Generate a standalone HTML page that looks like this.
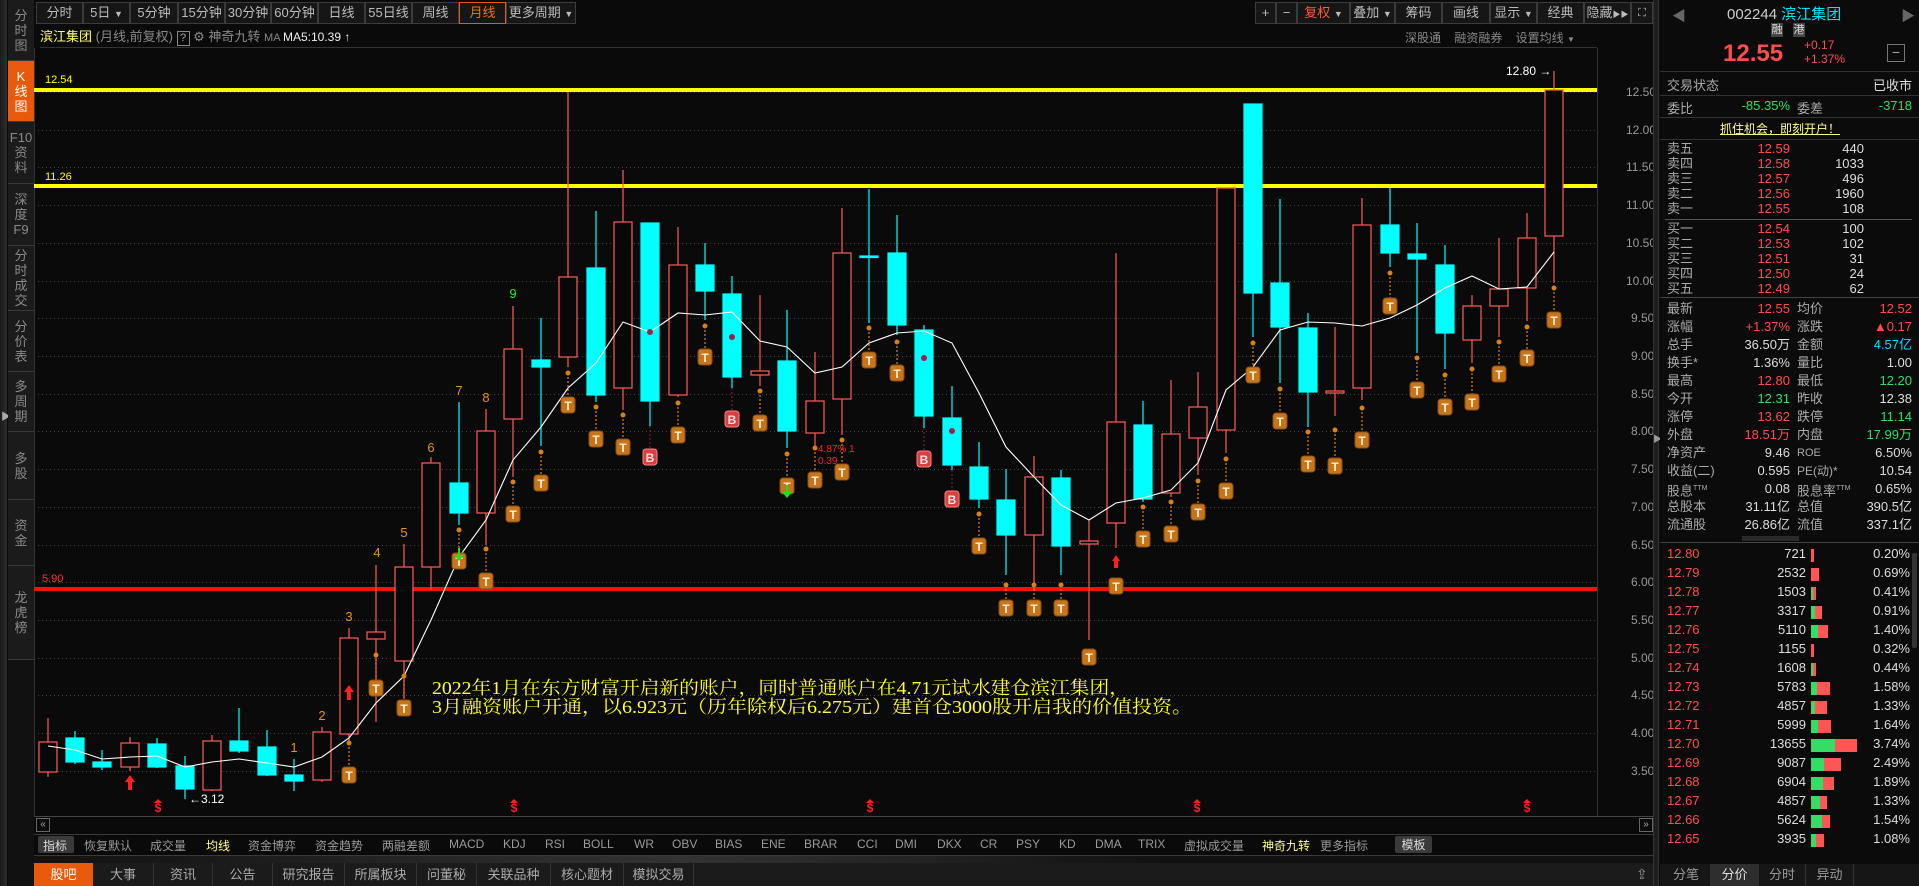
<!DOCTYPE html>
<html><head><meta charset="utf-8">
<style>
*{margin:0;padding:0;box-sizing:border-box}
body{width:1919px;height:886px;background:#0a0a0a;overflow:hidden;font-family:"Liberation Sans","Noto Sans CJK SC",sans-serif;position:relative}
.abs{position:absolute}
.tb{position:absolute;top:2px;height:22px;border:1px solid #3c3c3c;background:#161616;color:#bbb;font-size:13px;line-height:20px;text-align:center;white-space:nowrap;overflow:hidden}
.side{position:absolute;left:8px;width:26px;background:#1b1b1b;border-bottom:1px solid #3a3a3a;color:#8a8a8a;font-size:13px;line-height:15px;text-align:center;display:flex;flex-direction:column;justify-content:center}
svg text{font-family:"Liberation Sans","Noto Sans CJK SC",sans-serif}
</style></head><body>

<div class="abs" style="left:0;top:0;width:7px;height:886px;background:linear-gradient(90deg,#1a1a1a,#2e2e2e)"></div>
<div class="abs" style="left:1px;top:408px;color:#aaa;font-size:10px">▶</div>
<div class="side" style="top:0;height:61px">分<br>时<br>图</div>
<div class="side" style="top:61px;height:61px;background:#e8590c;color:#fff">K<br>线<br>图</div>
<div class="side" style="top:122px;height:62px">F10<br>资<br>料</div>
<div class="side" style="top:184px;height:62px">深<br>度<br>F9</div>
<div class="side" style="top:246px;height:65px">分<br>时<br>成<br>交</div>
<div class="side" style="top:311px;height:61px">分<br>价<br>表</div>
<div class="side" style="top:372px;height:60px">多<br>周<br>期</div>
<div class="side" style="top:432px;height:68px">多<br>股</div>
<div class="side" style="top:500px;height:66px">资<br>金</div>
<div class="side" style="top:566px;height:94px">龙<br>虎<br>榜</div>
<div class="abs" style="left:8px;top:660px;width:26px;height:226px;background:#111"></div>

<div class="tb" style="left:36px;width:47px">分时</div>
<div class="tb" style="left:83px;width:47px">5日 <span style="font-size:9px">▼</span></div>
<div class="tb" style="left:130px;width:48px">5分钟</div>
<div class="tb" style="left:178px;width:47px">15分钟</div>
<div class="tb" style="left:225px;width:46px">30分钟</div>
<div class="tb" style="left:271px;width:47px">60分钟</div>
<div class="tb" style="left:318px;width:47px">日线</div>
<div class="tb" style="left:365px;width:47px">55日线</div>
<div class="tb" style="left:412px;width:47px">周线</div>
<div class="tb" style="left:459px;width:47px;color:#ff6a1a;border-color:#e8590c">月线</div>
<div class="tb" style="left:506px;width:70px">更多周期 <span style="font-size:9px">▼</span></div>

<div class="tb" style="left:1255px;width:21px">+</div>
<div class="tb" style="left:1276px;width:21px">−</div>
<div class="tb" style="left:1297px;width:53px;color:#ff5a3a">复权 <span style="font-size:9px;color:#bbb">▼</span></div>
<div class="tb" style="left:1350px;width:45px">叠加 <span style="font-size:9px">▼</span></div>
<div class="tb" style="left:1395px;width:47px">筹码</div>
<div class="tb" style="left:1442px;width:48px">画线</div>
<div class="tb" style="left:1490px;width:47px">显示 <span style="font-size:9px">▼</span></div>
<div class="tb" style="left:1537px;width:47px">经典</div>
<div class="tb" style="left:1584px;width:47px">隐藏<span style="font-size:8px">▶▶</span></div>
<div class="tb" style="left:1631px;width:22px;font-size:11px">⛶</div>

<div class="abs" style="left:40px;top:29px;font-size:13px;color:#ccc;white-space:nowrap;line-height:16px">
<span style="color:#ffff66">滨江集团</span><span style="color:#888"> (月线,前复权) </span><span style="display:inline-block;border:1px solid #888;color:#aaa;width:13px;height:15px;text-align:center;font-size:11px;line-height:13px">?</span>
<span style="color:#888"> ⚙ 神奇九转 </span><span style="color:#888;font-size:11px">MA </span><span style="color:#eee;font-size:12px">MA5:10.39 ↑</span></div>
<div class="abs" style="left:1405px;top:29px;font-size:12px;color:#888;white-space:nowrap">深股通 &nbsp;&nbsp; 融资融券 &nbsp;&nbsp; 设置均线 <span style="font-size:8px">▼</span></div>
<div class="abs" style="left:40px;top:47px;width:1557px;height:1px;background:#333"></div>

<svg class="abs" style="left:0;top:0" width="1919" height="886" viewBox="0 0 1919 886">
<g stroke="#444" stroke-width="1" stroke-dasharray="1,3">
<line x1="34" y1="92.5" x2="1597" y2="92.5"/><line x1="34" y1="130.5" x2="1597" y2="130.5"/><line x1="34" y1="167.5" x2="1597" y2="167.5"/><line x1="34" y1="205.5" x2="1597" y2="205.5"/><line x1="34" y1="243.5" x2="1597" y2="243.5"/><line x1="34" y1="281.5" x2="1597" y2="281.5"/><line x1="34" y1="318.5" x2="1597" y2="318.5"/><line x1="34" y1="356.5" x2="1597" y2="356.5"/><line x1="34" y1="394.5" x2="1597" y2="394.5"/><line x1="34" y1="431.5" x2="1597" y2="431.5"/><line x1="34" y1="469.5" x2="1597" y2="469.5"/><line x1="34" y1="507.5" x2="1597" y2="507.5"/><line x1="34" y1="545.5" x2="1597" y2="545.5"/><line x1="34" y1="582.5" x2="1597" y2="582.5"/><line x1="34" y1="620.5" x2="1597" y2="620.5"/><line x1="34" y1="658.5" x2="1597" y2="658.5"/><line x1="34" y1="695.5" x2="1597" y2="695.5"/><line x1="34" y1="733.5" x2="1597" y2="733.5"/><line x1="34" y1="771.5" x2="1597" y2="771.5"/>
</g>
<line x1="34.5" y1="48" x2="34.5" y2="816" stroke="#333"/>
<line x1="1597.5" y1="48" x2="1597.5" y2="816" stroke="#333"/>
<line x1="34" y1="816.5" x2="1653" y2="816.5" stroke="#444"/>
<g fill="#999" font-size="12">
<text x="1626" y="96">12.50</text><text x="1626" y="134">12.00</text><text x="1626" y="171">11.50</text><text x="1626" y="209">11.00</text><text x="1626" y="247">10.50</text><text x="1626" y="285">10.00</text><text x="1631" y="322">9.50</text><text x="1631" y="360">9.00</text><text x="1631" y="398">8.50</text><text x="1631" y="435">8.00</text><text x="1631" y="473">7.50</text><text x="1631" y="511">7.00</text><text x="1631" y="549">6.50</text><text x="1631" y="586">6.00</text><text x="1631" y="624">5.50</text><text x="1631" y="662">5.00</text><text x="1631" y="699">4.50</text><text x="1631" y="737">4.00</text><text x="1631" y="775">3.50</text>
</g>
<rect x="34" y="88" width="1563" height="4" fill="#ffff00"/>
<rect x="34" y="184" width="1563" height="4" fill="#ffff00"/>
<rect x="34" y="587" width="1563" height="4" fill="#ff1010"/>
<text x="45" y="83" fill="#ffff00" font-size="11">12.54</text>
<text x="45" y="180" fill="#ffff00" font-size="11">11.26</text>
<text x="42" y="582" fill="#ff3030" font-size="11">5.90</text>

<g stroke-width="1.2">
<g stroke="#ff5a5a" fill="#080808">
<line x1="48" y1="718" x2="48" y2="777"/><rect x="39" y="742" width="18" height="30"/>
<line x1="130" y1="737" x2="130" y2="771"/><rect x="121" y="743" width="18" height="24"/>
<line x1="212" y1="735" x2="212" y2="791"/><rect x="203" y="741" width="18" height="49"/>
<line x1="322" y1="727" x2="322" y2="782"/><rect x="313" y="732" width="18" height="48"/>
<line x1="349" y1="628" x2="349" y2="745"/><rect x="340" y="638" width="18" height="96"/>
<line x1="376" y1="565" x2="376" y2="722"/><rect x="367" y="632" width="18" height="7"/>
<line x1="404" y1="544" x2="404" y2="699"/><rect x="395" y="567" width="18" height="94"/>
<line x1="431" y1="457" x2="431" y2="590"/><rect x="422" y="463" width="18" height="104"/>
<line x1="486" y1="409" x2="486" y2="545"/><rect x="477" y="431" width="18" height="82"/>
<line x1="513" y1="306" x2="513" y2="477"/><rect x="504" y="349" width="18" height="70"/>
<line x1="568" y1="92" x2="568" y2="367"/><rect x="559" y="277" width="18" height="80"/>
<line x1="623" y1="170" x2="623" y2="410"/><rect x="614" y="222" width="18" height="166"/>
<line x1="678" y1="227" x2="678" y2="397"/><rect x="669" y="265" width="18" height="130"/>
<line x1="760" y1="295" x2="760" y2="386"/><rect x="751" y="371" width="18" height="4"/>
<line x1="815" y1="352" x2="815" y2="447"/><rect x="806" y="401" width="18" height="32"/>
<line x1="842" y1="208" x2="842" y2="435"/><rect x="833" y="253" width="18" height="146"/>
<line x1="1034" y1="456" x2="1034" y2="590"/><rect x="1025" y="477" width="18" height="58"/>
<line x1="1089" y1="520" x2="1089" y2="640"/><rect x="1080" y="541" width="18" height="3"/>
<line x1="1116" y1="253" x2="1116" y2="548"/><rect x="1107" y="422" width="18" height="101"/>
<line x1="1171" y1="380" x2="1171" y2="497"/><rect x="1162" y="434" width="18" height="59"/>
<line x1="1198" y1="372" x2="1198" y2="475"/><rect x="1189" y="407" width="18" height="31"/>
<line x1="1226" y1="188" x2="1226" y2="453"/><rect x="1217" y="188" width="18" height="242"/>
<line x1="1335" y1="327" x2="1335" y2="416"/><rect x="1326" y="391" width="18" height="2"/>
<line x1="1362" y1="198" x2="1362" y2="400"/><rect x="1353" y="225" width="18" height="163"/>
<line x1="1472" y1="295" x2="1472" y2="363"/><rect x="1463" y="306" width="18" height="34"/>
<line x1="1499" y1="238" x2="1499" y2="337"/><rect x="1490" y="289" width="18" height="17"/>
<line x1="1527" y1="213" x2="1527" y2="321"/><rect x="1518" y="238" width="18" height="50"/>
<line x1="1554" y1="71" x2="1554" y2="283"/><rect x="1545" y="90" width="18" height="146"/>
</g>
<g stroke="#00ffff" fill="#00ffff">
<line x1="75" y1="731" x2="75" y2="764"/><rect x="66" y="738" width="18" height="24"/>
<line x1="102" y1="750" x2="102" y2="770"/><rect x="93" y="762" width="18" height="5"/>
<line x1="157" y1="738" x2="157" y2="768"/><rect x="148" y="744" width="18" height="23"/>
<line x1="185" y1="756" x2="185" y2="799"/><rect x="176" y="766" width="18" height="23"/>
<line x1="239" y1="708" x2="239" y2="753"/><rect x="230" y="741" width="18" height="10"/>
<line x1="267" y1="730" x2="267" y2="776"/><rect x="258" y="747" width="18" height="28"/>
<line x1="294" y1="759" x2="294" y2="791"/><rect x="285" y="775" width="18" height="6"/>
<line x1="459" y1="402" x2="459" y2="525"/><rect x="450" y="483" width="18" height="30"/>
<line x1="541" y1="318" x2="541" y2="446"/><rect x="532" y="360" width="18" height="7"/>
<line x1="596" y1="211" x2="596" y2="402"/><rect x="587" y="268" width="18" height="127"/>
<line x1="650" y1="223" x2="650" y2="426"/><rect x="641" y="223" width="18" height="178"/>
<line x1="705" y1="243" x2="705" y2="320"/><rect x="696" y="265" width="18" height="26"/>
<line x1="732" y1="276" x2="732" y2="388"/><rect x="723" y="294" width="18" height="83"/>
<line x1="787" y1="310" x2="787" y2="448"/><rect x="778" y="361" width="18" height="70"/>
<line x1="869" y1="189" x2="869" y2="323"/><rect x="860" y="256" width="18" height="1.5"/>
<line x1="897" y1="215" x2="897" y2="335"/><rect x="888" y="253" width="18" height="72"/>
<line x1="924" y1="325" x2="924" y2="428"/><rect x="915" y="330" width="18" height="86"/>
<line x1="952" y1="386" x2="952" y2="470"/><rect x="943" y="418" width="18" height="47"/>
<line x1="979" y1="442" x2="979" y2="508"/><rect x="970" y="467" width="18" height="32"/>
<line x1="1006" y1="469" x2="1006" y2="575"/><rect x="997" y="500" width="18" height="35"/>
<line x1="1061" y1="470" x2="1061" y2="575"/><rect x="1052" y="478" width="18" height="68"/>
<line x1="1143" y1="401" x2="1143" y2="502"/><rect x="1134" y="425" width="18" height="74"/>
<line x1="1253" y1="104" x2="1253" y2="337"/><rect x="1244" y="104" width="18" height="189"/>
<line x1="1280" y1="199" x2="1280" y2="383"/><rect x="1271" y="283" width="18" height="44"/>
<line x1="1308" y1="313" x2="1308" y2="427"/><rect x="1299" y="328" width="18" height="64"/>
<line x1="1390" y1="188" x2="1390" y2="267"/><rect x="1381" y="225" width="18" height="28"/>
<line x1="1417" y1="223" x2="1417" y2="353"/><rect x="1408" y="254" width="18" height="5"/>
<line x1="1445" y1="245" x2="1445" y2="369"/><rect x="1436" y="265" width="18" height="68"/>
</g>
</g>
<polyline fill="none" stroke="#fff" stroke-width="1.1" points="48,746 75,750 102,759 130,757 157,756 185,767 212,762 239,759 267,763 294,767 322,757 349,738 376,703 404,676 431,620 459,557 486,520 513,460 541,427 568,388 596,363 623,322 650,332 678,313 705,315 732,312 760,341 787,347 815,373 842,367 869,343 897,333 924,331 952,343 979,393 1006,447 1034,477 1061,505 1089,520 1116,503 1143,498 1171,490 1198,463 1226,390 1253,367 1280,330 1308,322 1335,323 1362,326 1390,318 1417,305 1445,288 1472,276 1499,289 1527,287 1554,252"/>
<g fill="#a0204a"><circle cx="650" cy="332" r="3"/><circle cx="732" cy="337" r="3"/><circle cx="924" cy="358" r="3"/><circle cx="952" cy="431" r="3"/></g>

<g stroke="#e08020" stroke-width="1.2" stroke-dasharray="2,2">
<line x1="349" y1="743" x2="349" y2="767"/><line x1="376" y1="655" x2="376" y2="680"/><line x1="404" y1="676" x2="404" y2="700"/><line x1="459" y1="530" x2="459" y2="553"/><line x1="486" y1="549" x2="486" y2="573"/><line x1="513" y1="482" x2="513" y2="506"/><line x1="541" y1="452" x2="541" y2="475"/><line x1="568" y1="373" x2="568" y2="397"/><line x1="596" y1="407" x2="596" y2="431"/><line x1="623" y1="415" x2="623" y2="439"/><line x1="678" y1="403" x2="678" y2="427"/><line x1="705" y1="326" x2="705" y2="349"/><line x1="760" y1="391" x2="760" y2="415"/><line x1="787" y1="454" x2="787" y2="478"/><line x1="815" y1="448" x2="815" y2="472"/><line x1="842" y1="440" x2="842" y2="464"/><line x1="869" y1="328" x2="869" y2="352"/><line x1="897" y1="342" x2="897" y2="365"/><line x1="979" y1="514" x2="979" y2="538"/><line x1="1006" y1="585" x2="1006" y2="600"/><line x1="1034" y1="585" x2="1034" y2="600"/><line x1="1061" y1="585" x2="1061" y2="600"/><line x1="1143" y1="507" x2="1143" y2="531"/><line x1="1171" y1="502" x2="1171" y2="526"/><line x1="1198" y1="481" x2="1198" y2="504"/><line x1="1226" y1="459" x2="1226" y2="483"/><line x1="1253" y1="343" x2="1253" y2="367"/><line x1="1280" y1="389" x2="1280" y2="413"/><line x1="1308" y1="432" x2="1308" y2="456"/><line x1="1335" y1="430" x2="1335" y2="458"/><line x1="1362" y1="408" x2="1362" y2="432"/><line x1="1390" y1="273" x2="1390" y2="298"/><line x1="1417" y1="358" x2="1417" y2="382"/><line x1="1445" y1="375" x2="1445" y2="399"/><line x1="1472" y1="369" x2="1472" y2="394"/><line x1="1499" y1="342" x2="1499" y2="366"/><line x1="1527" y1="327" x2="1527" y2="350"/><line x1="1554" y1="288" x2="1554" y2="312"/>
</g>
<g fill="#d8801a"><circle cx="349" cy="743" r="2.5"/><circle cx="376" cy="655" r="2.5"/><circle cx="404" cy="676" r="2.5"/><circle cx="459" cy="530" r="2.5"/><circle cx="486" cy="549" r="2.5"/><circle cx="513" cy="482" r="2.5"/><circle cx="541" cy="452" r="2.5"/><circle cx="568" cy="373" r="2.5"/><circle cx="596" cy="407" r="2.5"/><circle cx="623" cy="415" r="2.5"/><circle cx="678" cy="403" r="2.5"/><circle cx="705" cy="326" r="2.5"/><circle cx="760" cy="391" r="2.5"/><circle cx="787" cy="454" r="2.5"/><circle cx="815" cy="448" r="2.5"/><circle cx="842" cy="440" r="2.5"/><circle cx="869" cy="328" r="2.5"/><circle cx="897" cy="342" r="2.5"/><circle cx="979" cy="514" r="2.5"/><circle cx="1006" cy="585" r="2.5"/><circle cx="1034" cy="585" r="2.5"/><circle cx="1061" cy="585" r="2.5"/><circle cx="1143" cy="507" r="2.5"/><circle cx="1171" cy="502" r="2.5"/><circle cx="1198" cy="481" r="2.5"/><circle cx="1226" cy="459" r="2.5"/><circle cx="1253" cy="343" r="2.5"/><circle cx="1280" cy="389" r="2.5"/><circle cx="1308" cy="432" r="2.5"/><circle cx="1335" cy="430" r="2.5"/><circle cx="1362" cy="408" r="2.5"/><circle cx="1390" cy="273" r="2.5"/><circle cx="1417" cy="358" r="2.5"/><circle cx="1445" cy="375" r="2.5"/><circle cx="1472" cy="369" r="2.5"/><circle cx="1499" cy="342" r="2.5"/><circle cx="1527" cy="327" r="2.5"/><circle cx="1554" cy="288" r="2.5"/></g>
<g fill="#c8741a" stroke="#8a5010">
<rect x="342" y="767" width="14" height="16" rx="3"/><rect x="369" y="680" width="14" height="16" rx="3"/><rect x="397" y="700" width="14" height="16" rx="3"/><rect x="452" y="553" width="14" height="16" rx="3"/><rect x="479" y="573" width="14" height="16" rx="3"/><rect x="506" y="506" width="14" height="16" rx="3"/><rect x="534" y="475" width="14" height="16" rx="3"/><rect x="561" y="397" width="14" height="16" rx="3"/><rect x="589" y="431" width="14" height="16" rx="3"/><rect x="616" y="439" width="14" height="16" rx="3"/><rect x="671" y="427" width="14" height="16" rx="3"/><rect x="698" y="349" width="14" height="16" rx="3"/><rect x="753" y="415" width="14" height="16" rx="3"/><rect x="780" y="478" width="14" height="16" rx="3"/><rect x="808" y="472" width="14" height="16" rx="3"/><rect x="835" y="464" width="14" height="16" rx="3"/><rect x="862" y="352" width="14" height="16" rx="3"/><rect x="890" y="365" width="14" height="16" rx="3"/><rect x="972" y="538" width="14" height="16" rx="3"/><rect x="999" y="600" width="14" height="16" rx="3"/><rect x="1027" y="600" width="14" height="16" rx="3"/><rect x="1054" y="600" width="14" height="16" rx="3"/><rect x="1082" y="649" width="14" height="16" rx="3"/><rect x="1109" y="578" width="14" height="16" rx="3"/><rect x="1136" y="531" width="14" height="16" rx="3"/><rect x="1164" y="526" width="14" height="16" rx="3"/><rect x="1191" y="504" width="14" height="16" rx="3"/><rect x="1219" y="483" width="14" height="16" rx="3"/><rect x="1246" y="367" width="14" height="16" rx="3"/><rect x="1273" y="413" width="14" height="16" rx="3"/><rect x="1301" y="456" width="14" height="16" rx="3"/><rect x="1328" y="458" width="14" height="16" rx="3"/><rect x="1355" y="432" width="14" height="16" rx="3"/><rect x="1383" y="298" width="14" height="16" rx="3"/><rect x="1410" y="382" width="14" height="16" rx="3"/><rect x="1438" y="399" width="14" height="16" rx="3"/><rect x="1465" y="394" width="14" height="16" rx="3"/><rect x="1492" y="366" width="14" height="16" rx="3"/><rect x="1520" y="350" width="14" height="16" rx="3"/><rect x="1547" y="312" width="14" height="16" rx="3"/>
</g>
<g fill="#fff0d0" font-size="12" font-weight="bold" text-anchor="middle">
<text x="349" y="780">T</text><text x="376" y="693">T</text><text x="404" y="713">T</text><text x="459" y="566">T</text><text x="486" y="586">T</text><text x="513" y="519">T</text><text x="541" y="488">T</text><text x="568" y="410">T</text><text x="596" y="444">T</text><text x="623" y="452">T</text><text x="678" y="440">T</text><text x="705" y="362">T</text><text x="760" y="428">T</text><text x="787" y="491">T</text><text x="815" y="485">T</text><text x="842" y="477">T</text><text x="869" y="365">T</text><text x="897" y="378">T</text><text x="979" y="551">T</text><text x="1006" y="613">T</text><text x="1034" y="613">T</text><text x="1061" y="613">T</text><text x="1089" y="662">T</text><text x="1116" y="591">T</text><text x="1143" y="544">T</text><text x="1171" y="539">T</text><text x="1198" y="517">T</text><text x="1226" y="496">T</text><text x="1253" y="380">T</text><text x="1280" y="426">T</text><text x="1308" y="469">T</text><text x="1335" y="471">T</text><text x="1362" y="445">T</text><text x="1390" y="311">T</text><text x="1417" y="395">T</text><text x="1445" y="412">T</text><text x="1472" y="407">T</text><text x="1499" y="379">T</text><text x="1527" y="363">T</text><text x="1554" y="325">T</text>
</g>
<g stroke="#902030" stroke-dasharray="2,2"><line x1="650" y1="426" x2="650" y2="449"/><line x1="732" y1="388" x2="732" y2="411"/><line x1="924" y1="428" x2="924" y2="451"/><line x1="952" y1="470" x2="952" y2="491"/></g>
<g fill="#d84040" stroke="#ff8080"><rect x="643" y="449" width="14" height="16" rx="3"/><rect x="725" y="411" width="14" height="16" rx="3"/><rect x="917" y="451" width="14" height="16" rx="3"/><rect x="945" y="491" width="14" height="16" rx="3"/></g>
<g fill="#ffe0e0" font-size="12" font-weight="bold" text-anchor="middle"><text x="650" y="462">B</text><text x="732" y="424">B</text><text x="924" y="464">B</text><text x="952" y="504">B</text></g>
<g fill="#22dd22"><rect x="458" y="548" width="2" height="10"/><path d="M454,555 L464,555 L459,561Z"/><rect x="786" y="485" width="2" height="8"/><path d="M782,492 L792,492 L787,498Z"/></g>
<g fill="#ff2020"><path d="M130,775 L125,782 L128,782 L128,790 L132,790 L132,782 L135,782Z"/><path d="M349,685 L344,692 L347,692 L347,700 L351,700 L351,692 L354,692Z"/><path d="M1116,555 L1112,561 L1114,561 L1114,568 L1118,568 L1118,561 L1120,561Z"/></g>
<g fill="#ff2020" font-size="12" font-weight="bold" text-anchor="middle">
<path d="M154,803 L158,799 L162,803Z"/><text x="158" y="812">$</text>
<path d="M510,803 L514,799 L518,803Z"/><text x="514" y="812">$</text>
<path d="M866,803 L870,799 L874,803Z"/><text x="870" y="812">$</text>
<path d="M1193,803 L1197,799 L1201,803Z"/><text x="1197" y="812">$</text>
<path d="M1523,803 L1527,799 L1531,803Z"/><text x="1527" y="812">$</text>
</g>
<g fill="#e8901a" font-size="13" text-anchor="middle">
<text x="294" y="752">1</text><text x="322" y="720">2</text><text x="349" y="621">3</text><text x="377" y="557">4</text><text x="404" y="537">5</text><text x="431" y="452">6</text><text x="459" y="395">7</text><text x="486" y="402">8</text>
</g>
<text x="513" y="298" fill="#22ee22" font-size="13" text-anchor="middle">9</text>
<text x="189" y="803" fill="#fff" font-size="12">←3.12</text>
<text x="1506" y="75" fill="#fff" font-size="12">12.80 →</text>
<g fill="#ff2020" font-size="10"><text x="818" y="452">4.87%  1</text><text x="818" y="464">0.39</text></g>
<g fill="#ffff33" font-size="18">
<text x="432" y="694" textLength="697" lengthAdjust="spacingAndGlyphs" style="font-family:'Liberation Serif','Noto Serif CJK SC',serif">2022年1月在东方财富开启新的账户，同时普通账户在4.71元试水建仓滨江集团，</text>
<text x="432" y="713" textLength="760" lengthAdjust="spacingAndGlyphs" style="font-family:'Liberation Serif','Noto Serif CJK SC',serif">3月融资账户开通，以6.923元（历年除权后6.275元）建首仓3000股开启我的价值投资。</text>
</g>
</svg>

<div class="abs" style="left:36px;top:818px;width:14px;height:14px;border:1px solid #666;color:#aaa;font-size:10px;line-height:12px;text-align:center">«</div>
<div class="abs" style="left:1639px;top:818px;width:14px;height:14px;border:1px solid #666;color:#aaa;font-size:10px;line-height:12px;text-align:center">»</div>
<div class="abs" style="left:34px;top:834px;width:1619px;height:1px;background:#3a3a3a"></div>
<div class="abs" style="left:34px;top:855px;width:1619px;height:1px;background:#3a3a3a"></div>
<div class="abs" style="left:34px;top:856px;width:1619px;height:7px;background:linear-gradient(90deg,#111,#333 40%,#111 70%)"></div>
<div class="abs" style="left:38px;top:836px;width:36px;height:17px;background:#3a3a3a;border-radius:2px"></div>
<div class="abs" style="left:0;top:837px;width:1660px;height:16px;font-size:12px;color:#999;white-space:nowrap">
<span class="abs" style="left:43px;color:#ddd">指标</span>
<span class="abs" style="left:84px">恢复默认</span><span class="abs" style="left:150px">成交量</span><span class="abs" style="left:206px;color:#ffff88">均线</span><span class="abs" style="left:248px">资金博弈</span><span class="abs" style="left:315px">资金趋势</span><span class="abs" style="left:382px">两融差额</span>
<span class="abs" style="left:449px">MACD</span><span class="abs" style="left:503px">KDJ</span><span class="abs" style="left:545px">RSI</span><span class="abs" style="left:583px">BOLL</span><span class="abs" style="left:634px">WR</span><span class="abs" style="left:672px">OBV</span><span class="abs" style="left:715px">BIAS</span><span class="abs" style="left:761px">ENE</span><span class="abs" style="left:804px">BRAR</span><span class="abs" style="left:857px">CCI</span><span class="abs" style="left:895px">DMI</span><span class="abs" style="left:937px">DKX</span><span class="abs" style="left:980px">CR</span><span class="abs" style="left:1016px">PSY</span><span class="abs" style="left:1059px">KD</span><span class="abs" style="left:1095px">DMA</span><span class="abs" style="left:1138px">TRIX</span><span class="abs" style="left:1184px">虚拟成交量</span><span class="abs" style="left:1262px;color:#ffff88">神奇九转</span><span class="abs" style="left:1320px">更多指标</span>
<span class="abs" style="left:1395px;top:-1px;width:37px;height:17px;background:#3a3a3a;color:#ddd;text-align:center;border-radius:2px">模板</span>
</div>
<div class="abs" style="left:34px;top:863px;width:1619px;height:23px;background:#1b1b1b"></div>
<div class="abs" style="left:0;top:863px;width:1660px;height:23px;font-size:13px;color:#aaa;line-height:23px;white-space:nowrap">
<span class="abs" style="left:34px;width:59px;background:#e8590c;color:#fff;text-align:center">股吧</span>
<span class="abs" style="left:93px;width:61px;text-align:center;border-right:1px solid #333">大事</span><span class="abs" style="left:154px;width:59px;text-align:center;border-right:1px solid #333">资讯</span><span class="abs" style="left:213px;width:60px;text-align:center;border-right:1px solid #333">公告</span><span class="abs" style="left:273px;width:72px;text-align:center;border-right:1px solid #333">研究报告</span><span class="abs" style="left:345px;width:72px;text-align:center;border-right:1px solid #333">所属板块</span><span class="abs" style="left:417px;width:60px;text-align:center;border-right:1px solid #333">问董秘</span><span class="abs" style="left:477px;width:74px;text-align:center;border-right:1px solid #333">关联品种</span><span class="abs" style="left:551px;width:73px;text-align:center;border-right:1px solid #333">核心题材</span><span class="abs" style="left:624px;width:70px;text-align:center;border-right:1px solid #333">模拟交易</span>
<span class="abs" style="left:1636px;color:#999;font-size:14px">⇪</span>
</div>

<div class="abs" style="left:1653px;top:0;width:6px;height:886px;background:#1e1e1e;border-left:1px solid #333;border-right:1px solid #333"></div>
<div class="abs" style="left:1653px;top:432px;color:#999;font-size:9px">▶</div>

<div class="abs" style="left:1660px;top:0;width:259px;height:886px;background:#0b0b0b;color:#aaa;font-size:13px;white-space:nowrap">
<span class="abs" style="left:12px;top:6px;color:#666;font-size:14px">◀</span>
<span class="abs" style="left:241px;top:6px;color:#666;font-size:14px">▶</span>
<span class="abs" style="left:67px;top:3px;font-size:15px;color:#ccc">002244 <span style="color:#00e5ff">滨江集团</span></span>
<span class="abs" style="left:111px;top:23px;width:12px;height:14px;background:#444;color:#ddd;font-size:11px;line-height:14px;text-align:center">融</span>
<span class="abs" style="left:133px;top:23px;width:12px;height:14px;background:#444;color:#ddd;font-size:11px;line-height:14px;text-align:center">港</span>
<span class="abs" style="left:63px;top:40px;font-size:24px;font-weight:bold;color:#ff4d4d">12.55</span>
<span class="abs" style="left:144px;top:38px;font-size:12px;color:#ff4d4d;line-height:14px">+0.17<br>+1.37%</span>
<span class="abs" style="left:227px;top:44px;width:18px;height:18px;border:1px solid #777;color:#aaa;font-size:14px;line-height:15px;text-align:center">−</span>
<div class="abs" style="left:0;top:71px;width:259px;height:1px;background:#333"></div>
<span class="abs" style="left:7px;top:75px">交易状态</span><span class="abs" style="right:7px;top:75px;color:#ddd">已收市</span>
<div class="abs" style="left:0;top:95px;width:259px;height:1px;background:#333"></div>
<span class="abs" style="left:7px;top:98px">委比</span><span class="abs" style="right:129px;top:98px;color:#33dd66">-85.35%</span><span class="abs" style="left:137px;top:98px">委差</span><span class="abs" style="right:7px;top:98px;color:#33dd66">-3718</span>
<div class="abs" style="left:0;top:117px;width:259px;height:1px;background:#333"></div>
<span class="abs" style="left:60px;top:120px;color:#ffff88;text-decoration:underline;font-size:12px">抓住机会，即刻开户！</span>
<div class="abs" style="left:0;top:139px;width:259px;height:1px;background:#333"></div>
<div class="abs" style="left:0;top:141px;width:259px;font-size:13px;line-height:15px">
<div style="position:relative;height:15px"><span class="abs" style="left:7px">卖五</span><span class="abs" style="right:129px;color:#ff4d4d">12.59</span><span class="abs" style="right:55px;color:#ddd">440</span></div>
<div style="position:relative;height:15px"><span class="abs" style="left:7px">卖四</span><span class="abs" style="right:129px;color:#ff4d4d">12.58</span><span class="abs" style="right:55px;color:#ddd">1033</span></div>
<div style="position:relative;height:15px"><span class="abs" style="left:7px">卖三</span><span class="abs" style="right:129px;color:#ff4d4d">12.57</span><span class="abs" style="right:55px;color:#ddd">496</span></div>
<div style="position:relative;height:15px"><span class="abs" style="left:7px">卖二</span><span class="abs" style="right:129px;color:#ff4d4d">12.56</span><span class="abs" style="right:55px;color:#ddd">1960</span></div>
<div style="position:relative;height:15px"><span class="abs" style="left:7px">卖一</span><span class="abs" style="right:129px;color:#ff4d4d">12.55</span><span class="abs" style="right:55px;color:#ddd">108</span></div>
</div>
<div class="abs" style="left:5px;top:219px;width:247px;height:1px;background:#555"></div>
<div class="abs" style="left:0;top:221px;width:259px;font-size:13px;line-height:15px">
<div style="position:relative;height:15px"><span class="abs" style="left:7px">买一</span><span class="abs" style="right:129px;color:#ff4d4d">12.54</span><span class="abs" style="right:55px;color:#ddd">100</span></div>
<div style="position:relative;height:15px"><span class="abs" style="left:7px">买二</span><span class="abs" style="right:129px;color:#ff4d4d">12.53</span><span class="abs" style="right:55px;color:#ddd">102</span></div>
<div style="position:relative;height:15px"><span class="abs" style="left:7px">买三</span><span class="abs" style="right:129px;color:#ff4d4d">12.51</span><span class="abs" style="right:55px;color:#ddd">31</span></div>
<div style="position:relative;height:15px"><span class="abs" style="left:7px">买四</span><span class="abs" style="right:129px;color:#ff4d4d">12.50</span><span class="abs" style="right:55px;color:#ddd">24</span></div>
<div style="position:relative;height:15px"><span class="abs" style="left:7px">买五</span><span class="abs" style="right:129px;color:#ff4d4d">12.49</span><span class="abs" style="right:55px;color:#ddd">62</span></div>
</div>
<div class="abs" style="left:0;top:297px;width:259px;height:1px;background:#444"></div>
<div class="abs" style="left:0;top:300px;width:259px;font-size:13px;line-height:18px">
<div style="position:relative;height:18px"><span class="abs" style="left:7px">最新</span><span class="abs" style="right:129px;color:#ff4d4d">12.55</span><span class="abs" style="left:137px">均价</span><span class="abs" style="right:7px;color:#ff4d4d">12.52</span></div>
<div style="position:relative;height:18px"><span class="abs" style="left:7px">涨幅</span><span class="abs" style="right:129px;color:#ff4d4d">+1.37%</span><span class="abs" style="left:137px">涨跌</span><span class="abs" style="right:7px;color:#ff4d4d">▲0.17</span></div>
<div style="position:relative;height:18px"><span class="abs" style="left:7px">总手</span><span class="abs" style="right:129px;color:#ddd">36.50万</span><span class="abs" style="left:137px">金额</span><span class="abs" style="right:7px;color:#00e5ff">4.57亿</span></div>
<div style="position:relative;height:18px"><span class="abs" style="left:7px">换手*</span><span class="abs" style="right:129px;color:#ddd">1.36%</span><span class="abs" style="left:137px">量比</span><span class="abs" style="right:7px;color:#ddd">1.00</span></div>
<div style="position:relative;height:18px"><span class="abs" style="left:7px">最高</span><span class="abs" style="right:129px;color:#ff4d4d">12.80</span><span class="abs" style="left:137px">最低</span><span class="abs" style="right:7px;color:#33dd66">12.20</span></div>
<div style="position:relative;height:18px"><span class="abs" style="left:7px">今开</span><span class="abs" style="right:129px;color:#33dd66">12.31</span><span class="abs" style="left:137px">昨收</span><span class="abs" style="right:7px;color:#ddd">12.38</span></div>
<div style="position:relative;height:18px"><span class="abs" style="left:7px">涨停</span><span class="abs" style="right:129px;color:#ff4d4d">13.62</span><span class="abs" style="left:137px">跌停</span><span class="abs" style="right:7px;color:#33dd66">11.14</span></div>
<div style="position:relative;height:18px"><span class="abs" style="left:7px">外盘</span><span class="abs" style="right:129px;color:#ff4d4d">18.51万</span><span class="abs" style="left:137px">内盘</span><span class="abs" style="right:7px;color:#33dd66">17.99万</span></div>
<div style="position:relative;height:18px"><span class="abs" style="left:7px">净资产</span><span class="abs" style="right:129px;color:#ddd">9.46</span><span class="abs" style="left:137px;font-size:11px">ROE</span><span class="abs" style="right:7px;color:#ddd">6.50%</span></div>
<div style="position:relative;height:18px"><span class="abs" style="left:7px">收益(二)</span><span class="abs" style="right:129px;color:#ddd">0.595</span><span class="abs" style="left:137px;font-size:12px">PE(动)*</span><span class="abs" style="right:7px;color:#ddd">10.54</span></div>
<div style="position:relative;height:18px"><span class="abs" style="left:7px">股息<sup style="font-size:7px">TTM</sup></span><span class="abs" style="right:129px;color:#ddd">0.08</span><span class="abs" style="left:137px">股息率<sup style="font-size:7px">TTM</sup></span><span class="abs" style="right:7px;color:#ddd">0.65%</span></div>
<div style="position:relative;height:18px"><span class="abs" style="left:7px">总股本</span><span class="abs" style="right:129px;color:#ddd">31.11亿</span><span class="abs" style="left:137px">总值</span><span class="abs" style="right:7px;color:#ddd">390.5亿</span></div>
<div style="position:relative;height:18px"><span class="abs" style="left:7px">流通股</span><span class="abs" style="right:129px;color:#ddd">26.86亿</span><span class="abs" style="left:137px">流值</span><span class="abs" style="right:7px;color:#ddd">337.1亿</span></div>
</div>
<div class="abs" style="left:82px;top:536px;width:57px;height:5px;background:#2a2a2a"></div>
<div class="abs" style="left:0;top:542px;width:259px;height:1px;background:#444"></div>
<div class="abs" style="left:252px;top:553px;width:5px;height:95px;background:#333;border-radius:2px"></div>
<div class="abs" style="left:0;top:544px;width:250px;font-size:13px;line-height:19px">
<div style="position:relative;height:19px"><span class="abs" style="left:7px;color:#ff4d4d">12.80</span><span class="abs" style="right:104px;color:#ddd">721</span><span class="abs" style="left:151px;top:5px;width:3px;height:13px;background:#ff5555"></span><span class="abs" style="right:0;color:#ddd">0.20%</span></div>
<div style="position:relative;height:19px"><span class="abs" style="left:7px;color:#ff4d4d">12.79</span><span class="abs" style="right:104px;color:#ddd">2532</span><span class="abs" style="left:151px;top:5px;width:8px;height:13px;background:#ff5555"></span><span class="abs" style="right:0;color:#ddd">0.69%</span></div>
<div style="position:relative;height:19px"><span class="abs" style="left:7px;color:#ff4d4d">12.78</span><span class="abs" style="right:104px;color:#ddd">1503</span><span class="abs" style="left:151px;top:5px;width:2px;height:13px;background:#33dd66"></span><span class="abs" style="left:153px;top:5px;width:3px;height:13px;background:#ff5555"></span><span class="abs" style="right:0;color:#ddd">0.41%</span></div>
<div style="position:relative;height:19px"><span class="abs" style="left:7px;color:#ff4d4d">12.77</span><span class="abs" style="right:104px;color:#ddd">3317</span><span class="abs" style="left:151px;top:5px;width:4px;height:13px;background:#33dd66"></span><span class="abs" style="left:155px;top:5px;width:7px;height:13px;background:#ff5555"></span><span class="abs" style="right:0;color:#ddd">0.91%</span></div>
<div style="position:relative;height:19px"><span class="abs" style="left:7px;color:#ff4d4d">12.76</span><span class="abs" style="right:104px;color:#ddd">5110</span><span class="abs" style="left:151px;top:5px;width:7px;height:13px;background:#33dd66"></span><span class="abs" style="left:158px;top:5px;width:10px;height:13px;background:#ff5555"></span><span class="abs" style="right:0;color:#ddd">1.40%</span></div>
<div style="position:relative;height:19px"><span class="abs" style="left:7px;color:#ff4d4d">12.75</span><span class="abs" style="right:104px;color:#ddd">1155</span><span class="abs" style="left:151px;top:5px;width:3px;height:13px;background:#ff5555"></span><span class="abs" style="right:0;color:#ddd">0.32%</span></div>
<div style="position:relative;height:19px"><span class="abs" style="left:7px;color:#ff4d4d">12.74</span><span class="abs" style="right:104px;color:#ddd">1608</span><span class="abs" style="left:151px;top:5px;width:2px;height:13px;background:#33dd66"></span><span class="abs" style="left:153px;top:5px;width:3px;height:13px;background:#ff5555"></span><span class="abs" style="right:0;color:#ddd">0.44%</span></div>
<div style="position:relative;height:19px"><span class="abs" style="left:7px;color:#ff4d4d">12.73</span><span class="abs" style="right:104px;color:#ddd">5783</span><span class="abs" style="left:151px;top:5px;width:6px;height:13px;background:#33dd66"></span><span class="abs" style="left:157px;top:5px;width:13px;height:13px;background:#ff5555"></span><span class="abs" style="right:0;color:#ddd">1.58%</span></div>
<div style="position:relative;height:19px"><span class="abs" style="left:7px;color:#ff4d4d">12.72</span><span class="abs" style="right:104px;color:#ddd">4857</span><span class="abs" style="left:151px;top:5px;width:4px;height:13px;background:#33dd66"></span><span class="abs" style="left:155px;top:5px;width:12px;height:13px;background:#ff5555"></span><span class="abs" style="right:0;color:#ddd">1.33%</span></div>
<div style="position:relative;height:19px"><span class="abs" style="left:7px;color:#ff4d4d">12.71</span><span class="abs" style="right:104px;color:#ddd">5999</span><span class="abs" style="left:151px;top:5px;width:7px;height:13px;background:#33dd66"></span><span class="abs" style="left:158px;top:5px;width:13px;height:13px;background:#ff5555"></span><span class="abs" style="right:0;color:#ddd">1.64%</span></div>
<div style="position:relative;height:19px"><span class="abs" style="left:7px;color:#ff4d4d">12.70</span><span class="abs" style="right:104px;color:#ddd">13655</span><span class="abs" style="left:151px;top:5px;width:24px;height:13px;background:#33dd66"></span><span class="abs" style="left:175px;top:5px;width:22px;height:13px;background:#ff5555"></span><span class="abs" style="right:0;color:#ddd">3.74%</span></div>
<div style="position:relative;height:19px"><span class="abs" style="left:7px;color:#ff4d4d">12.69</span><span class="abs" style="right:104px;color:#ddd">9087</span><span class="abs" style="left:151px;top:5px;width:13px;height:13px;background:#33dd66"></span><span class="abs" style="left:164px;top:5px;width:17px;height:13px;background:#ff5555"></span><span class="abs" style="right:0;color:#ddd">2.49%</span></div>
<div style="position:relative;height:19px"><span class="abs" style="left:7px;color:#ff4d4d">12.68</span><span class="abs" style="right:104px;color:#ddd">6904</span><span class="abs" style="left:151px;top:5px;width:12px;height:13px;background:#33dd66"></span><span class="abs" style="left:163px;top:5px;width:11px;height:13px;background:#ff5555"></span><span class="abs" style="right:0;color:#ddd">1.89%</span></div>
<div style="position:relative;height:19px"><span class="abs" style="left:7px;color:#ff4d4d">12.67</span><span class="abs" style="right:104px;color:#ddd">4857</span><span class="abs" style="left:151px;top:5px;width:9px;height:13px;background:#33dd66"></span><span class="abs" style="left:160px;top:5px;width:7px;height:13px;background:#ff5555"></span><span class="abs" style="right:0;color:#ddd">1.33%</span></div>
<div style="position:relative;height:19px"><span class="abs" style="left:7px;color:#ff4d4d">12.66</span><span class="abs" style="right:104px;color:#ddd">5624</span><span class="abs" style="left:151px;top:5px;width:11px;height:13px;background:#33dd66"></span><span class="abs" style="left:162px;top:5px;width:8px;height:13px;background:#ff5555"></span><span class="abs" style="right:0;color:#ddd">1.54%</span></div>
<div style="position:relative;height:19px"><span class="abs" style="left:7px;color:#ff4d4d">12.65</span><span class="abs" style="right:104px;color:#ddd">3935</span><span class="abs" style="left:151px;top:5px;width:5px;height:13px;background:#33dd66"></span><span class="abs" style="left:156px;top:5px;width:8px;height:13px;background:#ff5555"></span><span class="abs" style="right:0;color:#ddd">1.08%</span></div>
</div>
<div class="abs" style="left:0;top:864px;width:259px;height:22px;background:#161616;font-size:13px;line-height:22px;color:#999">
<span class="abs" style="left:2px;width:48px;text-align:center">分笔</span>
<span class="abs" style="left:50px;width:49px;text-align:center;background:#2e2e2e;color:#ddd">分价</span>
<span class="abs" style="left:99px;width:47px;text-align:center;border-right:1px solid #333">分时</span>
<span class="abs" style="left:146px;width:48px;text-align:center;border-right:1px solid #333">异动</span>
</div>
</div>
</body></html>
